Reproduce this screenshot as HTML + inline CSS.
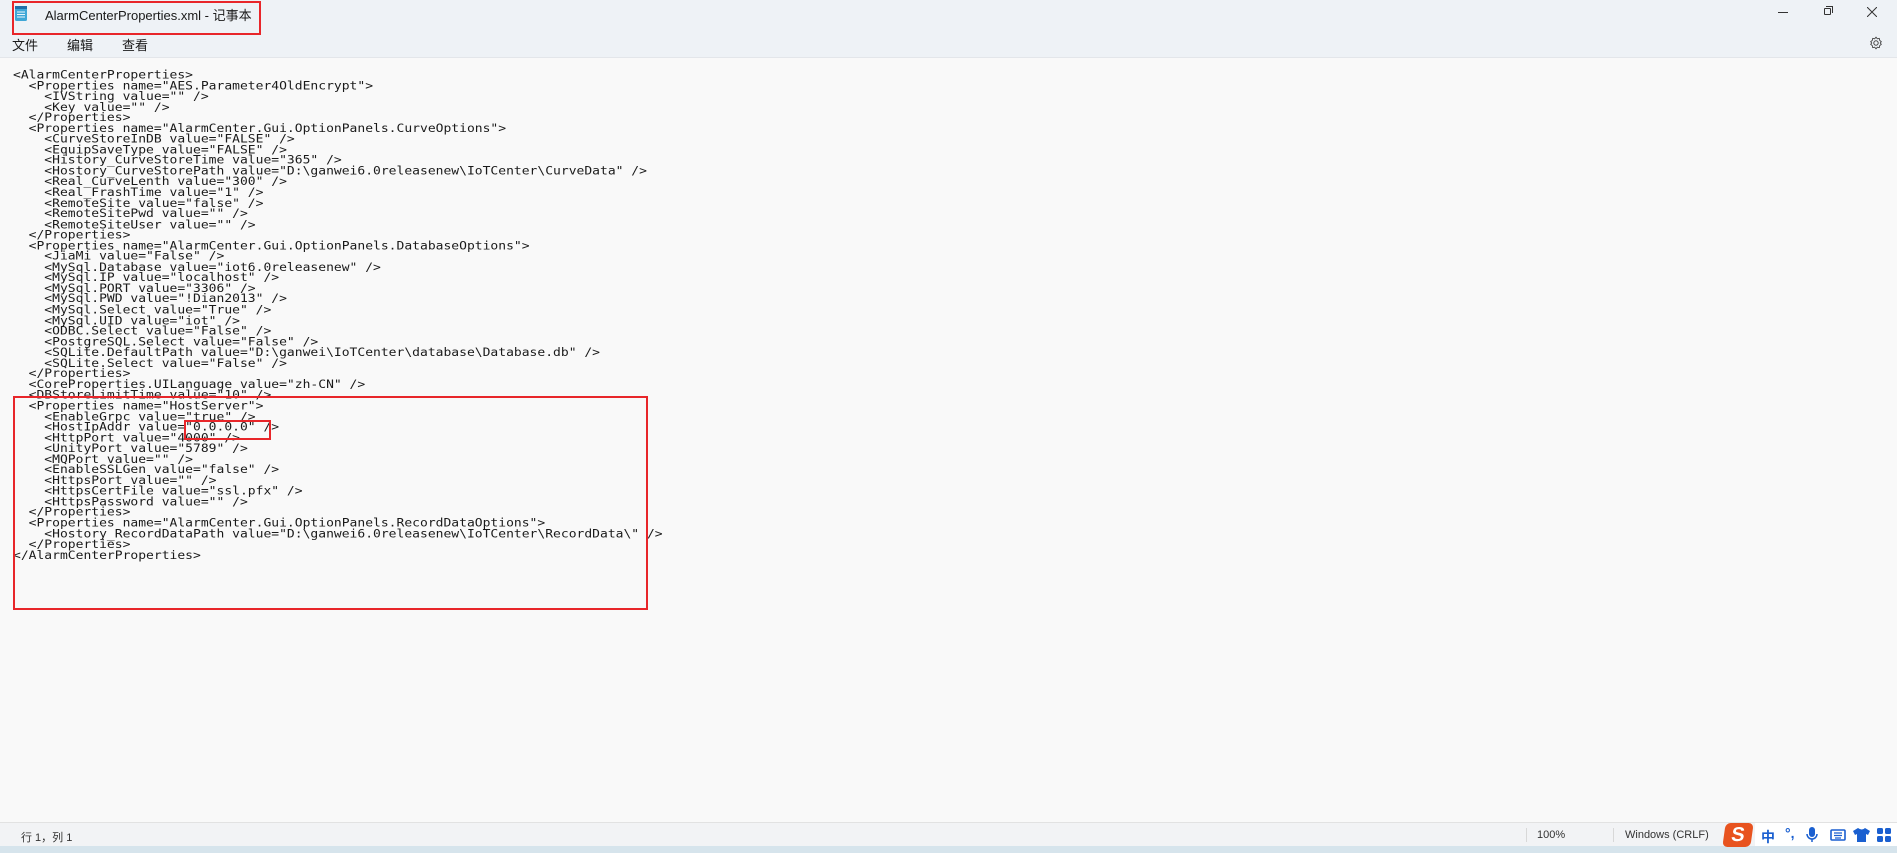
<!DOCTYPE html>
<html><head><meta charset="utf-8"><style>
*{margin:0;padding:0;box-sizing:border-box}
html,body{width:1897px;height:853px;overflow:hidden;background:#f9f9f9;font-family:"Liberation Sans","Noto Sans CJK SC",sans-serif;position:relative}
.hdr{position:absolute;left:0;top:0;width:1897px;height:58px;background:#eef2f6;border-bottom:1px solid #e3e6ea}
.t{position:absolute;white-space:nowrap;color:#1a1a1a}
pre{position:absolute;left:13px;top:71px;font-family:"DejaVu Sans Mono","Liberation Mono",monospace;font-size:13px;line-height:12.55px;letter-spacing:0;color:#1a1a1a;transform:scaleY(0.85);transform-origin:0 0}
.sb{position:absolute;left:0;top:822px;width:1897px;height:24px;background:#f2f3f5;border-top:1px solid #e2e2e2}
.tb{position:absolute;left:0;top:846px;width:1897px;height:7px;background:#d6e4ec}
.red{position:absolute;border:2px solid #e8262a}
.sep{position:absolute;top:828px;width:1px;height:14px;background:#d8d8d8}
</style></head><body>
<div class="hdr"></div>
<svg style="position:absolute;left:14px;top:5px" width="14" height="17" viewBox="0 0 14 17"><rect x="1" y="1" width="12" height="15" rx="1.5" fill="#3fa7d6"/><rect x="1" y="1" width="12" height="3" fill="#1f6fa8"/><g stroke="#e8f5fc" stroke-width="1"><line x1="3" y1="7" x2="11" y2="7"/><line x1="3" y1="9.5" x2="11" y2="9.5"/><line x1="3" y1="12" x2="11" y2="12"/></g></svg>
<div class="t" style="left:45px;top:5px;font-size:13px">AlarmCenterProperties.xml - 记事本</div>
<div class="red" style="left:12px;top:1px;width:249px;height:34px"></div>
<div class="t" style="left:12px;top:35px;font-size:13px">文件</div>
<div class="t" style="left:67px;top:35px;font-size:13px">编辑</div>
<div class="t" style="left:122px;top:35px;font-size:13px">查看</div>
<div style="position:absolute;left:1778px;top:12px;width:10px;height:1px;background:#333"></div>
<div style="position:absolute;left:1824px;top:8px;width:7px;height:7px;border:1px solid #333;border-radius:1px"></div>
<div style="position:absolute;left:1826px;top:6px;width:7px;height:7px;border-top:1px solid #333;border-right:1px solid #333"></div>
<svg style="position:absolute;left:1867px;top:7px" width="10" height="10"><path d="M0 0L10 10M10 0L0 10" stroke="#333" stroke-width="1"/></svg>
<svg style="position:absolute;left:1869px;top:36px" width="14" height="14" viewBox="0 0 14 14"><circle cx="7" cy="7" r="2.2" fill="none" stroke="#444"/><path d="M7 1.2l1.3 1.6 2-.4.4 2 1.6 1.3-1 1.3 1 1.3-1.6 1.3-.4 2-2-.4L7 12.8l-1.3-1.6-2 .4-.4-2L1.7 8.3l1-1.3-1-1.3 1.6-1.3.4-2 2 .4z" fill="none" stroke="#444" stroke-width=".9"/></svg>
<pre>&lt;AlarmCenterProperties&gt;
  &lt;Properties name="AES.Parameter4OldEncrypt"&gt;
    &lt;IVString value="" /&gt;
    &lt;Key value="" /&gt;
  &lt;/Properties&gt;
  &lt;Properties name="AlarmCenter.Gui.OptionPanels.CurveOptions"&gt;
    &lt;CurveStoreInDB value="FALSE" /&gt;
    &lt;EquipSaveType value="FALSE" /&gt;
    &lt;History_CurveStoreTime value="365" /&gt;
    &lt;Hostory_CurveStorePath value="D:\ganwei6.0releasenew\IoTCenter\CurveData" /&gt;
    &lt;Real_CurveLenth value="300" /&gt;
    &lt;Real_FrashTime value="1" /&gt;
    &lt;RemoteSite value="false" /&gt;
    &lt;RemoteSitePwd value="" /&gt;
    &lt;RemoteSiteUser value="" /&gt;
  &lt;/Properties&gt;
  &lt;Properties name="AlarmCenter.Gui.OptionPanels.DatabaseOptions"&gt;
    &lt;JiaMi value="False" /&gt;
    &lt;MySql.Database value="iot6.0releasenew" /&gt;
    &lt;MySql.IP value="localhost" /&gt;
    &lt;MySql.PORT value="3306" /&gt;
    &lt;MySql.PWD value="!Dian2013" /&gt;
    &lt;MySql.Select value="True" /&gt;
    &lt;MySql.UID value="iot" /&gt;
    &lt;ODBC.Select value="False" /&gt;
    &lt;PostgreSQL.Select value="False" /&gt;
    &lt;SQLite.DefaultPath value="D:\ganwei\IoTCenter\database\Database.db" /&gt;
    &lt;SQLite.Select value="False" /&gt;
  &lt;/Properties&gt;
  &lt;CoreProperties.UILanguage value="zh-CN" /&gt;
  &lt;DBStoreLimitTime value="10" /&gt;
  &lt;Properties name="HostServer"&gt;
    &lt;EnableGrpc value="true" /&gt;
    &lt;HostIpAddr value="0.0.0.0" /&gt;
    &lt;HttpPort value="4000" /&gt;
    &lt;UnityPort value="5789" /&gt;
    &lt;MQPort value="" /&gt;
    &lt;EnableSSLGen value="false" /&gt;
    &lt;HttpsPort value="" /&gt;
    &lt;HttpsCertFile value="ssl.pfx" /&gt;
    &lt;HttpsPassword value="" /&gt;
  &lt;/Properties&gt;
  &lt;Properties name="AlarmCenter.Gui.OptionPanels.RecordDataOptions"&gt;
    &lt;Hostory_RecordDataPath value="D:\ganwei6.0releasenew\IoTCenter\RecordData\" /&gt;
  &lt;/Properties&gt;
&lt;/AlarmCenterProperties&gt;</pre>
<div class="red" style="left:13px;top:396px;width:635px;height:214px"></div>
<div class="red" style="left:184px;top:420px;width:87px;height:20px"></div>
<div class="sb"></div>
<div class="tb"></div>
<div class="t" style="left:21px;top:829px;font-size:11px;color:#333">行 1，列 1</div>
<div class="sep" style="left:1526px"></div>
<div class="t" style="left:1537px;top:829px;font-size:11px;color:#333">100%</div>
<div class="sep" style="left:1613px"></div>
<div class="t" style="left:1625px;top:829px;font-size:11px;color:#333">Windows (CRLF)</div>
<div style="position:absolute;left:1724px;top:823px;width:28px;height:24px;background:#e8531f;border-radius:5px;transform:skewX(-8deg);color:#fff;font:bold 20px/24px 'Liberation Sans',sans-serif;text-align:center">S</div>
<div style="position:absolute;left:1755px;top:823px;width:142px;height:23px;background:#fff"></div>
<div class="t" style="left:1761px;top:827px;font-size:14px;font-weight:bold;color:#1a5fd0">中</div>
<div class="t" style="left:1785px;top:825px;font-size:14px;font-weight:bold;color:#1a5fd0">°,</div>
<svg style="position:absolute;left:1806px;top:827px" width="12" height="16"><rect x="3" y="0" width="6" height="10" rx="3" fill="#1a5fd0"/><path d="M1 7a5 5 0 0 0 10 0M6 12v3" stroke="#1a5fd0" fill="none" stroke-width="1.5"/></svg>
<svg style="position:absolute;left:1830px;top:829px" width="16" height="12"><rect x="1" y="1" width="14" height="10" rx="1" fill="none" stroke="#1a5fd0" stroke-width="1.6"/><path d="M4 4h8M4 6.5h8M5 9h6" stroke="#1a5fd0" stroke-width="1.2"/></svg>
<svg style="position:absolute;left:1853px;top:828px" width="17" height="14"><path d="M5 0L0 3l2 4 2-1v8h9V6l2 1 2-4-5-3q-3 3-7 0z" fill="#1a5fd0"/></svg>
<svg style="position:absolute;left:1877px;top:828px" width="14" height="14"><rect x="0" y="0" width="6" height="6" rx="1.5" fill="#1a5fd0"/><rect x="8" y="0" width="6" height="6" rx="1.5" fill="#1a5fd0"/><rect x="0" y="8" width="6" height="6" rx="1.5" fill="#1a5fd0"/><rect x="8" y="8" width="6" height="6" rx="1.5" fill="#1a5fd0"/></svg>
</body></html>
